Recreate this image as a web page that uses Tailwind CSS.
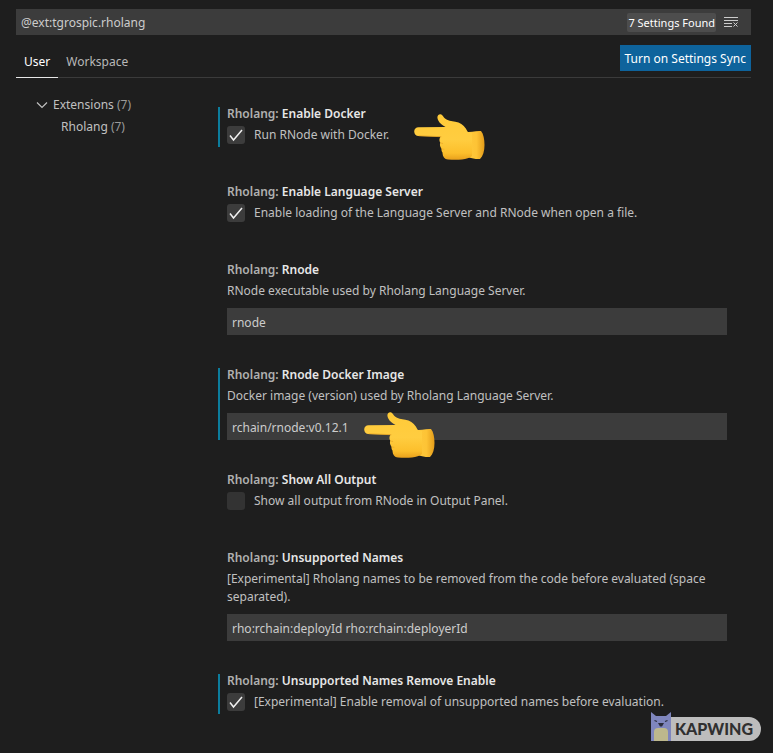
<!DOCTYPE html>
<html lang="en">
<head>
<meta charset="utf-8">
<meta name="viewport" content="width=device-width, initial-scale=1">
<title>Settings</title>
<script src="https://cdn.jsdelivr.net/npm/@tailwindcss/browser@4"></script>
</head>
<body class="min-h-screen bg-[#1e1e1e] font-['Noto_Sans','Open_Sans',sans-serif] text-[12px] leading-[18px] text-[#c0c0c0]">
<svg class="absolute size-0" aria-hidden="true">
  <defs>
    <linearGradient id="palm" x1="0" y1="0" x2="0" y2="1">
      <stop offset="0" stop-color="#ffca38"/><stop offset=".55" stop-color="#ffcd40"/><stop offset=".85" stop-color="#fcbf2c"/><stop offset="1" stop-color="#e8a01c"/>
    </linearGradient>
    <linearGradient id="cuff" x1="0" y1="0" x2="1" y2="0">
      <stop offset="0" stop-color="#ffcd40"/><stop offset=".65" stop-color="#fdc335"/><stop offset="1" stop-color="#e39c1a"/>
    </linearGradient>
    <symbol id="hand" viewBox="0 0 72 48">
      <path fill="url(#cuff)" d="M48 19c6 1 13-1.500 19-1 2.500 3 3.500 8 3.500 14 0 6-1.500 11-4.500 14-4.500.3-8-.8-11-1.500l-7-2z"/>
      <path fill="url(#palm)" d="M4.500 14.200C2 14.200.2 16 .2 18.500S2 23 4.500 23l22 .8c-1.400 2-1.400 4-.2 6-.8 2-.2 4.200 1.200 5.700-.2 1.800.2 3 1 4 .2 4.500 2 6.700 5.500 7 5 .5 10 .4 14 0 4-.5 8-1.800 10-3.500V20c-2 0-3.500-.2-4.500-1.500-2-4-5-7.500-9-9C40 8 36.500 8.500 33 6.800 30.500 5.500 29.500 4 28.500 2.500 27.200 1 25.500 1 24.300 2.100c-1.400 1.500-1 3.400 0 5.400 1.400 2.800 3.700 4.700 7.200 6.500z"/>
      <path fill="none" stroke="#edaa24" stroke-width=".8" stroke-linecap="round" d="M5 22.700l22 1M26.500 29.700c.8.6 1.400.8 2.200.8M27.700 35.600c.8.6 1.400.7 2.200.7"/>
    </symbol>
  </defs>
</svg>

<div class="relative flex min-h-screen flex-col pr-[22px] pl-4 pt-[9px]">
  <header>
    <div class="flex h-[26px] items-center bg-[#3c3c3c] pr-3">
      <input aria-label="Search settings" class="min-w-0 flex-1 bg-transparent px-[5px] pt-px text-[#cccccc] outline-none" value="@ext:tgrospic.rholang">
      <span class="mr-2 rounded-[2px] bg-[#4d4d4d] px-px text-[11px] leading-[19px] text-white">7 Settings Found</span>
      <button aria-label="Clear search results" class="text-[#cccccc]">
        <svg width="15" height="12" viewBox="0 0 15 12" fill="none" stroke="currentColor"><path d="M0 1.500h14M0 4.500h14M0 7.500h8M0 10.500h8M9.500 6.500l4 4M13.500 6.500l-4 4"/></svg>
      </button>
    </div>
    <div class="flex h-[43px] items-end justify-between border-b border-[#3b3b3b]">
      <nav class="-mb-px flex">
        <button class="border-b border-[#e7e7e7] px-2 pb-[6px] text-white">User</button>
        <button class="border-b border-transparent px-2 pb-[6px] text-[#b8b8b8]">Workspace</button>
      </nav>
      <button class="mb-[6px] h-[26px] bg-[#0e639c] px-[5px] pt-px whitespace-nowrap text-white">Turn on Settings Sync</button>
    </div>
  </header>

  <div class="flex">
    <nav class="w-[211px] shrink-0 pt-4 leading-[22px]" aria-label="Settings groups">
      <a href="#extensions" class="flex items-center pl-5"><svg class="mr-[5px]" width="12" height="8" viewBox="0 0 12 8" fill="none" stroke="#c0c0c0" stroke-width="1.200"><path d="M1 1.500l5 5 5-5"/></svg>Extensions&nbsp;<span class="text-[#9a9a9a]">(7)</span></a>
      <a href="#rholang" class="flex pl-[45px]">Rholang&nbsp;<span class="text-[#9a9a9a]">(7)</span></a>
    </nav>

    <main id="rholang" class="min-w-0 flex-1 pt-[27px] pr-6">
      <section class="relative mb-9">
        <span class="absolute -left-[9px] top-[2px] bottom-0 w-[2px] bg-[#0c7d9d]"></span>
        <h3 class="font-semibold text-[#b0b0b0]">Rholang: <span class="text-[#e7e7e7]">Enable Docker</span></h3>
        <label class="flex h-6 items-center gap-[9px]">
          <span class="grid size-[18px] shrink-0"><input type="checkbox" checked class="peer col-start-1 row-start-1 appearance-none rounded-[3px] bg-[#3c3c3c]"><svg class="pointer-events-none invisible col-start-1 row-start-1 peer-checked:visible" viewBox="0 0 18 18" fill="none" stroke="#f0f0f0" stroke-width="1.500"><path d="M3 9.500l3.500 4.500L15 4"/></svg></span>
          Run RNode with Docker.
        </label>
        <svg class="absolute left-[187px] top-[8px] h-[48px] w-[72px]" aria-hidden="true"><use href="#hand"/></svg>
      </section>

      <section class="mb-9">
        <h3 class="font-semibold text-[#b0b0b0]">Rholang: <span class="text-[#e7e7e7]">Enable Language Server</span></h3>
        <label class="flex h-6 items-center gap-[9px]">
          <span class="grid size-[18px] shrink-0"><input type="checkbox" checked class="peer col-start-1 row-start-1 appearance-none rounded-[3px] bg-[#3c3c3c]"><svg class="pointer-events-none invisible col-start-1 row-start-1 peer-checked:visible" viewBox="0 0 18 18" fill="none" stroke="#f0f0f0" stroke-width="1.500"><path d="M3 9.500l3.500 4.500L15 4"/></svg></span>
          Enable loading of the Language Server and RNode when open a file.
        </label>
      </section>

      <section class="mb-[31px]">
        <h3 class="font-semibold text-[#b0b0b0]">Rholang: <span class="text-[#e7e7e7]">Rnode</span></h3>
        <label for="rnode" class="mt-[3px] block">RNode executable used by Rholang Language Server.</label>
        <input id="rnode" class="mt-2 block h-[27px] w-full bg-[#3c3c3c] px-[5px] pt-px text-[#cccccc] outline-none" value="rnode">
      </section>

      <section class="relative mb-[31px]">
        <span class="absolute -left-[9px] top-[2px] bottom-0 w-[2px] bg-[#0c7d9d]"></span>
        <h3 class="font-semibold text-[#b0b0b0]">Rholang: <span class="text-[#e7e7e7]">Rnode Docker Image</span></h3>
        <label for="image" class="mt-[3px] block">Docker image (version) used by Rholang Language Server.</label>
        <input id="image" class="mt-2 block h-[27px] w-full bg-[#3c3c3c] px-[5px] pt-px text-[#cccccc] outline-none" value="rchain/rnode:v0.12.1">
        <svg class="absolute left-[137px] top-[45px] h-[48px] w-[72px]" aria-hidden="true"><use href="#hand"/></svg>
      </section>

      <section class="mb-9">
        <h3 class="font-semibold text-[#b0b0b0]">Rholang: <span class="text-[#e7e7e7]">Show All Output</span></h3>
        <label class="flex h-6 items-center gap-[9px]">
          <span class="grid size-[18px] shrink-0"><input type="checkbox" class="peer col-start-1 row-start-1 appearance-none rounded-[3px] bg-[#333333]"><svg class="pointer-events-none invisible col-start-1 row-start-1 peer-checked:visible" viewBox="0 0 18 18" fill="none" stroke="#f0f0f0" stroke-width="1.500"><path d="M3 9.500l3.500 4.500L15 4"/></svg></span>
          Show all output from RNode in Output Panel.
        </label>
      </section>

      <section class="mb-[31px]">
        <h3 class="font-semibold text-[#b0b0b0]">Rholang: <span class="text-[#e7e7e7]">Unsupported Names</span></h3>
        <label for="names" class="mt-[3px] block">[Experimental] Rholang names to be removed from the code before evaluated (space separated).</label>
        <input id="names" class="mt-2 block h-[27px] w-full bg-[#3c3c3c] px-[5px] pt-px text-[#cccccc] outline-none" value="rho:rchain:deployId rho:rchain:deployerId">
      </section>

      <section class="relative">
        <span class="absolute -left-[9px] top-[2px] bottom-0 w-[2px] bg-[#0c7d9d]"></span>
        <h3 class="font-semibold text-[#b0b0b0]">Rholang: <span class="text-[#e7e7e7]">Unsupported Names Remove Enable</span></h3>
        <label class="flex h-6 items-center gap-[9px]">
          <span class="grid size-[18px] shrink-0"><input type="checkbox" checked class="peer col-start-1 row-start-1 appearance-none rounded-[3px] bg-[#3c3c3c]"><svg class="pointer-events-none invisible col-start-1 row-start-1 peer-checked:visible" viewBox="0 0 18 18" fill="none" stroke="#f0f0f0" stroke-width="1.500"><path d="M3 9.500l3.500 4.500L15 4"/></svg></span>
          [Experimental] Enable removal of unsupported names before evaluation.
        </label>
      </section>
    </main>
  </div>

  <div class="absolute right-3 bottom-3 flex h-[29px] items-end">
    <svg width="20" height="29" viewBox="0 0 20 29" aria-hidden="true">
      <path fill="#7f86bd" d="M0 0l5 4h10l5-4v29H0z"/>
      <path fill="#bdb88d" d="M3 29V20q0-4 4-4h6q4 0 4 4v9z"/>
      <path fill="#2b2c3c" d="M7 11h6l-2 3.500H9z"/>
      <path fill="none" stroke="#2b2c3c" stroke-width="1.300" d="M3.500 8.500l2.500 1M16.500 8.500l-2.500 1"/>
    </svg>
    <span class="flex h-6 items-center rounded-r-full bg-[#bdbdbd] pr-2 pl-1 font-['Lato',sans-serif] text-[16px] font-black text-[#303030]">KAPWING</span>
  </div>
</div>
</body>
</html>
